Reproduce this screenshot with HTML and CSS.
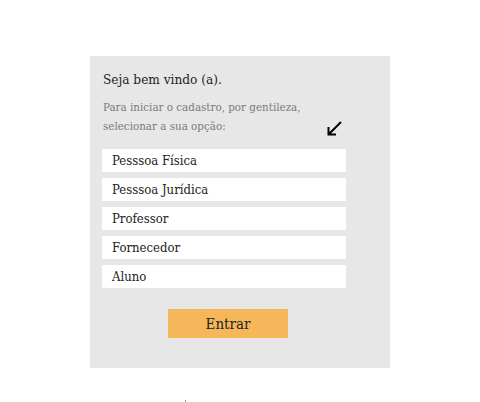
FILE: index.html
```html
<!DOCTYPE html>
<html lang="pt">
<head>
<meta charset="utf-8">
<title>Cadastro</title>
<link rel="stylesheet" href="styles.css">
</head>
<body>
<div class="page">
  <section class="panel">
    <h1 class="title">Seja bem vindo (a).</h1>
    <div class="intro">
      <p class="subtitle">Para iniciar o cadastro, por gentileza,<br>selecionar a sua opção:</p>
      <span class="arrow">
        <svg width="17" height="17" viewBox="0 0 17 17"><path d="M15 2 L3 14 M2.5 7 L2.5 14.5 L10 14.5" fill="none" stroke="#000" stroke-width="2"/></svg>
      </span>
    </div>
    <ul class="options">
      <li class="option">Pesssoa Física</li>
      <li class="option">Pesssoa Jurídica</li>
      <li class="option">Professor</li>
      <li class="option">Fornecedor</li>
      <li class="option">Aluno</li>
    </ul>
    <div class="actions">
      <button class="btn">Entrar</button>
    </div>
  </section>
  <span class="dot"></span>
</div>
</body>
</html>
```
FILE: styles.css
```css
* { box-sizing: border-box; }
html, body { margin: 0; padding: 0; background: #fff; }
body { font-family: "DejaVu Serif", "Liberation Serif", serif; font-stretch: condensed; }
.page { width: 480px; height: 402px; position: relative; padding: 56px 0 0 90px; }
.panel {
  width: 300px; height: 312px; background: #e7e7e7;
  padding: 14px 0 0 13px;
}
.title { margin: 0; font-weight: normal; font-size: 13.5px; line-height: 18px; color: #222; }
.intro { display: flex; align-items: flex-end; margin-top: 10px; }
.subtitle { margin: 0; font-size: 11.5px; line-height: 19px; color: #7a7a7a; width: 223px; }
.arrow { display: block; line-height: 0; margin-bottom: -1px; }
.options { list-style: none; margin: 13px 0 0 -1px; padding: 0; display: flex; flex-direction: column; gap: 6px; }
.option {
  width: 244px; height: 23px; background: #fff; color: #222;
  font-size: 13px; line-height: 23px; padding-left: 10px;
}
.actions { display: flex; padding-left: 65px; margin-top: 21px; }
.btn {
  width: 120px; height: 29px; border: 0; background: #f6b75a; color: #222;
  font-family: inherit; font-stretch: condensed; font-size: 15px; padding: 0;
}
.dot { position: absolute; left: 185px; top: 400px; width: 1px; height: 2px; background: #999; }
```
